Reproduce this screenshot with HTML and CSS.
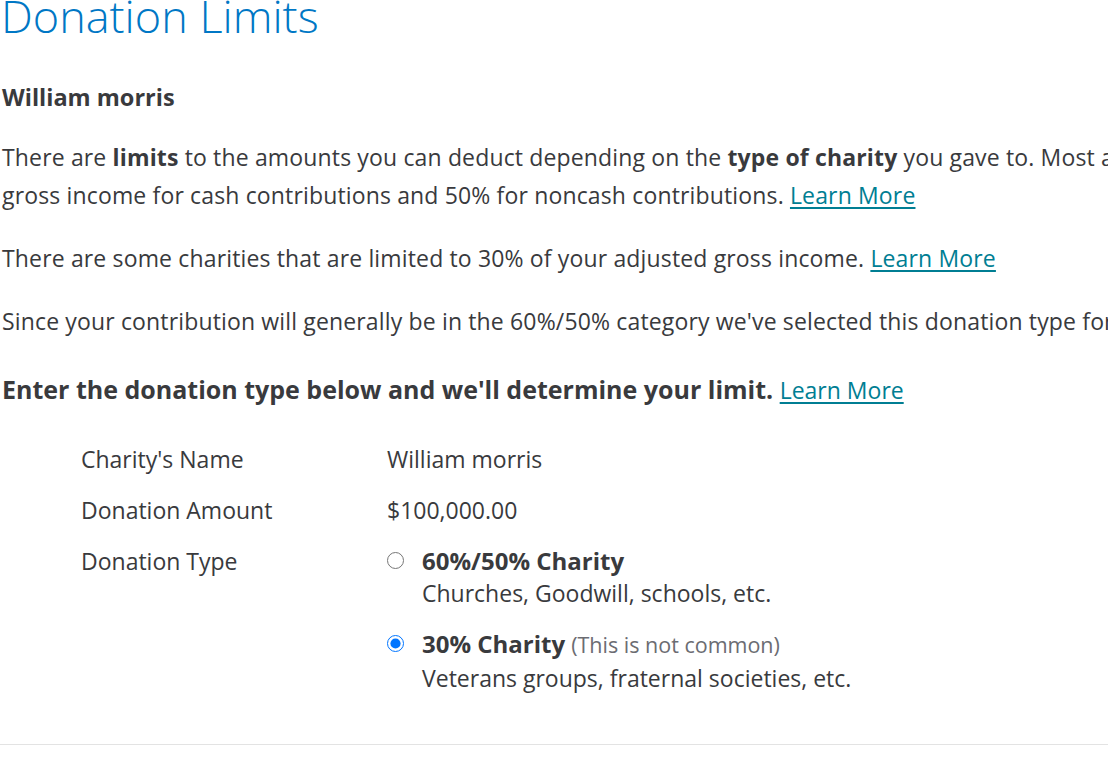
FILE: index.html
```html
<!DOCTYPE html>
<html>
<head>
    <title>Donation Limits</title>
    <link rel="stylesheet" href="styles.css">
</head>
<body>
    <div class="page">
        <h1 class="page-title">Donation Limits</h1>
        <h3 class="charity-name">William morris</h3>
        <p class="copy">There are <b>limits</b> to the amounts you can deduct depending on the <b>type of charity</b> you gave to. Most are limited to 60% of your adjusted gross income for cash contributions and 50% for noncash contributions. <a href="#">Learn More</a></p>
        <p class="copy">There are some charities that are limited to 30% of your adjusted gross income. <a href="#">Learn More</a></p>
        <p class="copy">Since your contribution will generally be in the 60%/50% category we've selected this donation type for you.</p>
        <h3 class="prompt">Enter the donation type below and we'll determine your limit. <a href="#">Learn More</a></h3>

        <div class="details">
            <div class="row">
                <div class="label">Charity's Name</div>
                <div class="value">William morris</div>
            </div>
            <div class="row">
                <div class="label">Donation Amount</div>
                <div class="value">$100,000.00</div>
            </div>
            <div class="row">
                <div class="label">Donation Type</div>
                <div class="value">
                    <label class="option">
                        <input type="radio" name="type">
                        <span class="option-text">
                            <b>60%/50% Charity</b>
                            <span class="desc">Churches, Goodwill, schools, etc.</span>
                        </span>
                    </label>
                    <label class="option">
                        <input type="radio" name="type" checked>
                        <span class="option-text">
                            <b>30% Charity</b> <span class="note">(This is not common)</span>
                            <span class="desc">Veterans groups, fraternal societies, etc.</span>
                        </span>
                    </label>
                </div>
            </div>
        </div>
        <hr class="divider">
    </div>
</body>
</html>
```

FILE: styles.css
```css
body {
    margin: 0;
    padding: 0;
    overflow: hidden;
    background-color: #ffffff;
    font-family: "Open Sans", "Liberation Sans", sans-serif;
    color: #393a3d;
}
.page {
    width: 1500px;
    padding: 0 0 0 2px;
}
.page-title {
    margin: -12px 0 0 -1px;
    font-size: 45px;
    font-weight: 300;
    color: #0077c5;
    line-height: 56px;
}
.charity-name {
    margin: 37px 0 0 0;
    font-size: 23.5px;
    font-weight: 700;
    line-height: 32px;
}
.copy {
    margin: 25px 0 0 0;
    font-size: 23px;
    line-height: 38px;
    letter-spacing: 0.15px;
}
.copy + .copy {
    margin-top: 25px;
}
a {
    color: #007e93;
    text-decoration: underline;
    text-underline-offset: 3px;
}
.prompt {
    margin: 30px 0 0 0;
    font-size: 25px;
    font-weight: 700;
    line-height: 38px;
}
.prompt a {
    font-size: 23px;
    font-weight: 400;
}
.details {
    margin: 35px 0 0 79px;
}
.row {
    display: flex;
    font-size: 23px;
    line-height: 30px;
    margin-bottom: 21px;
}
.label {
    width: 306px;
}
.value {
    display: flex;
    flex-direction: column;
}
.option {
    display: flex;
    align-items: flex-start;
    margin-bottom: 19px;
}
.option input {
    width: 17px;
    height: 17px;
    margin: 6px 18px 0 0;
}
.option-text b {
    font-size: 24px;
    color: #393a3d;
}
.option-text .desc {
    display: block;
    line-height: 34px;
}
.option + .option .desc {
    line-height: 37px;
}
.note {
    color: #6b6c72;
    font-size: 21.5px;
}
.divider {
    border: 0;
    border-top: 1px solid #e3e3e3;
    margin: 28px 0 0 -2px;
}
```
